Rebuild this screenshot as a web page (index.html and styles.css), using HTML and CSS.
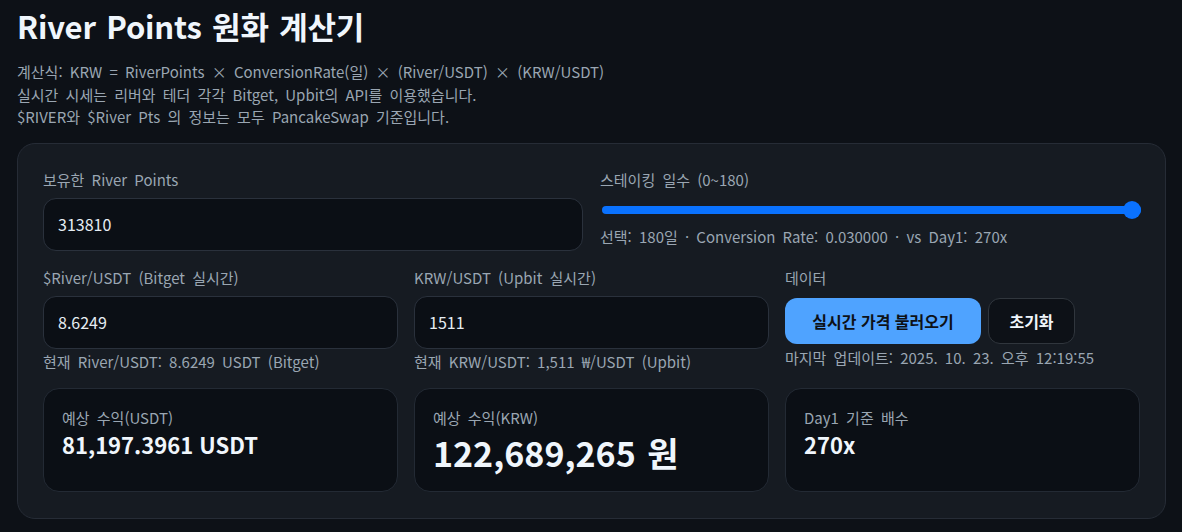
FILE: index.html
```html
<!DOCTYPE html>
<html lang="ko">
<head>
<meta charset="utf-8">
<title>River Points 원화 계산기</title>
<link rel="stylesheet" href="styles.css">
</head>
<body>
<main class="page">
  <h1 class="title">River Points 원화 계산기</h1>
  <div class="desc">
    <p>계산식: KRW = RiverPoints × ConversionRate(일) × (River/USDT) × (KRW/USDT)</p>
    <p>실시간 시세는 리버와 테더 각각 Bitget, Upbit의 API를 이용했습니다.</p>
    <p>$RIVER와 $River Pts 의 정보는 모두 PancakeSwap 기준입니다.</p>
  </div>
  <section class="card">
    <div class="row two">
      <div class="field">
        <label class="label">보유한 River Points</label>
        <input class="input" type="text" value="313810">
      </div>
      <div class="field">
        <label class="label">스테이킹 일수 (0~180)</label>
        <input class="range" type="range" min="0" max="180" value="180">
        <div class="hint">선택: 180일 · Conversion Rate: 0.030000 · vs Day1: 270x</div>
      </div>
    </div>
    <div class="row three">
      <div class="field">
        <label class="label">$River/USDT (Bitget 실시간)</label>
        <input class="input" type="text" value="8.6249">
        <div class="hint tight">현재 River/USDT: 8.6249 USDT (Bitget)</div>
      </div>
      <div class="field">
        <label class="label">KRW/USDT (Upbit 실시간)</label>
        <input class="input" type="text" value="1511">
        <div class="hint tight">현재 KRW/USDT: 1,511 ₩/USDT (Upbit)</div>
      </div>
      <div class="field">
        <label class="label">데이터</label>
        <div class="buttons">
          <button class="btn primary">실시간 가격 불러오기</button>
          <button class="btn ghost">초기화</button>
        </div>
        <div class="hint update">마지막 업데이트: 2025. 10. 23. 오후 12:19:55</div>
      </div>
    </div>
    <div class="row three results">
      <div class="stat">
        <div class="stat-label">예상 수익(USDT)</div>
        <div class="stat-value">81,197.3961 USDT</div>
      </div>
      <div class="stat">
        <div class="stat-label">예상 수익(KRW)</div>
        <div class="stat-value big">122,689,265 원</div>
      </div>
      <div class="stat">
        <div class="stat-label">Day1 기준 배수</div>
        <div class="stat-value">270x</div>
      </div>
    </div>
  </section>
</main>
</body>
</html>
```
FILE: styles.css
```css
* { box-sizing: border-box; }
html, body { margin: 0; padding: 0; }
body {
  background: #0d1117;
  color: #e6edf3;
  font-family: "Noto Sans CJK KR", "Noto Sans", sans-serif;
  word-spacing: 3px;
}
.page {
  padding: 4px 16px 0 17px;
}
.title {
  margin: 0;
  font-size: 31px;
  line-height: 44px;
  font-weight: 700;
  color: #f0f6fc;
  letter-spacing: -0.2px;
  word-spacing: 2px;
}
.desc {
  margin-top: 13px;
  color: #9aa6b2;
  font-size: 15px;
  line-height: 22.5px;
}
.desc p { margin: 0; }
.card {
  margin-top: 14px;
  background: #161b22;
  border: 1px solid #262c36;
  border-radius: 18px;
  padding: 25px 25px 26px 25px;
  display: flex;
  flex-direction: column;
  gap: 16px;
}
.row { display: grid; gap: 16px; }
.row.two { grid-template-columns: 1fr 1fr; gap: 17px; }
.row.three { grid-template-columns: 1fr 1fr 1fr; }
.row.results { margin-top: -1px; }
.field { display: flex; flex-direction: column; }
.label {
  color: #9aa6b2;
  font-size: 15px;
  line-height: 22px;
  margin-bottom: 7px;
}
.input {
  height: 53px;
  background: #0b0f15;
  border: 1px solid #2a313c;
  border-radius: 13px;
  color: #e6edf3;
  font: inherit;
  font-size: 16px;
  padding: 0 14px;
  outline: none;
}
.hint {
  color: #9aa6b2;
  font-size: 15px;
  line-height: 22px;
}
.hint.tight { margin-top: 2px; }
.range {
  -webkit-appearance: none;
  appearance: none;
  margin: 0 0 0 2px;
  height: 24px;
  width: calc(100% - 1px);
  background: transparent;
}
.range::-webkit-slider-runnable-track {
  height: 8px;
  border-radius: 4px;
  background: #0a72ff;
}
.range::-webkit-slider-thumb {
  -webkit-appearance: none;
  width: 18px;
  height: 18px;
  border-radius: 50%;
  background: #0a72ff;
  margin-top: -5px;
}
.range + .hint { margin-top: 4px; }
.buttons { display: flex; gap: 7px; margin-top: 2px; }
.btn {
  height: 46px;
  border-radius: 12px;
  font: inherit;
  font-size: 16px;
  font-weight: 700;
  padding: 0 8px;
  cursor: pointer;
}
.btn.primary {
  background: #4fa3ff;
  color: #0d1117;
  border: none;
  width: 196px;
}
.btn.ghost {
  background: #0d1117;
  color: #f0f6fc;
  border: 1px solid #30363d;
  width: 87px;
}
.hint.update { margin-top: 3px; }
.stat {
  height: 104px;
  background: #0b0f15;
  border: 1px solid #232a34;
  border-radius: 16px;
  padding: 18px 18px;
}
.stat-label {
  color: #9aa6b2;
  font-size: 15px;
  line-height: 22px;
}
.stat-value {
  font-size: 22px;
  line-height: 30px;
  font-weight: 700;
  color: #f0f6fc;
  word-spacing: 0;
}
.stat-value.big {
  font-size: 34px;
  line-height: 48px;
  word-spacing: 2px;
}
```
